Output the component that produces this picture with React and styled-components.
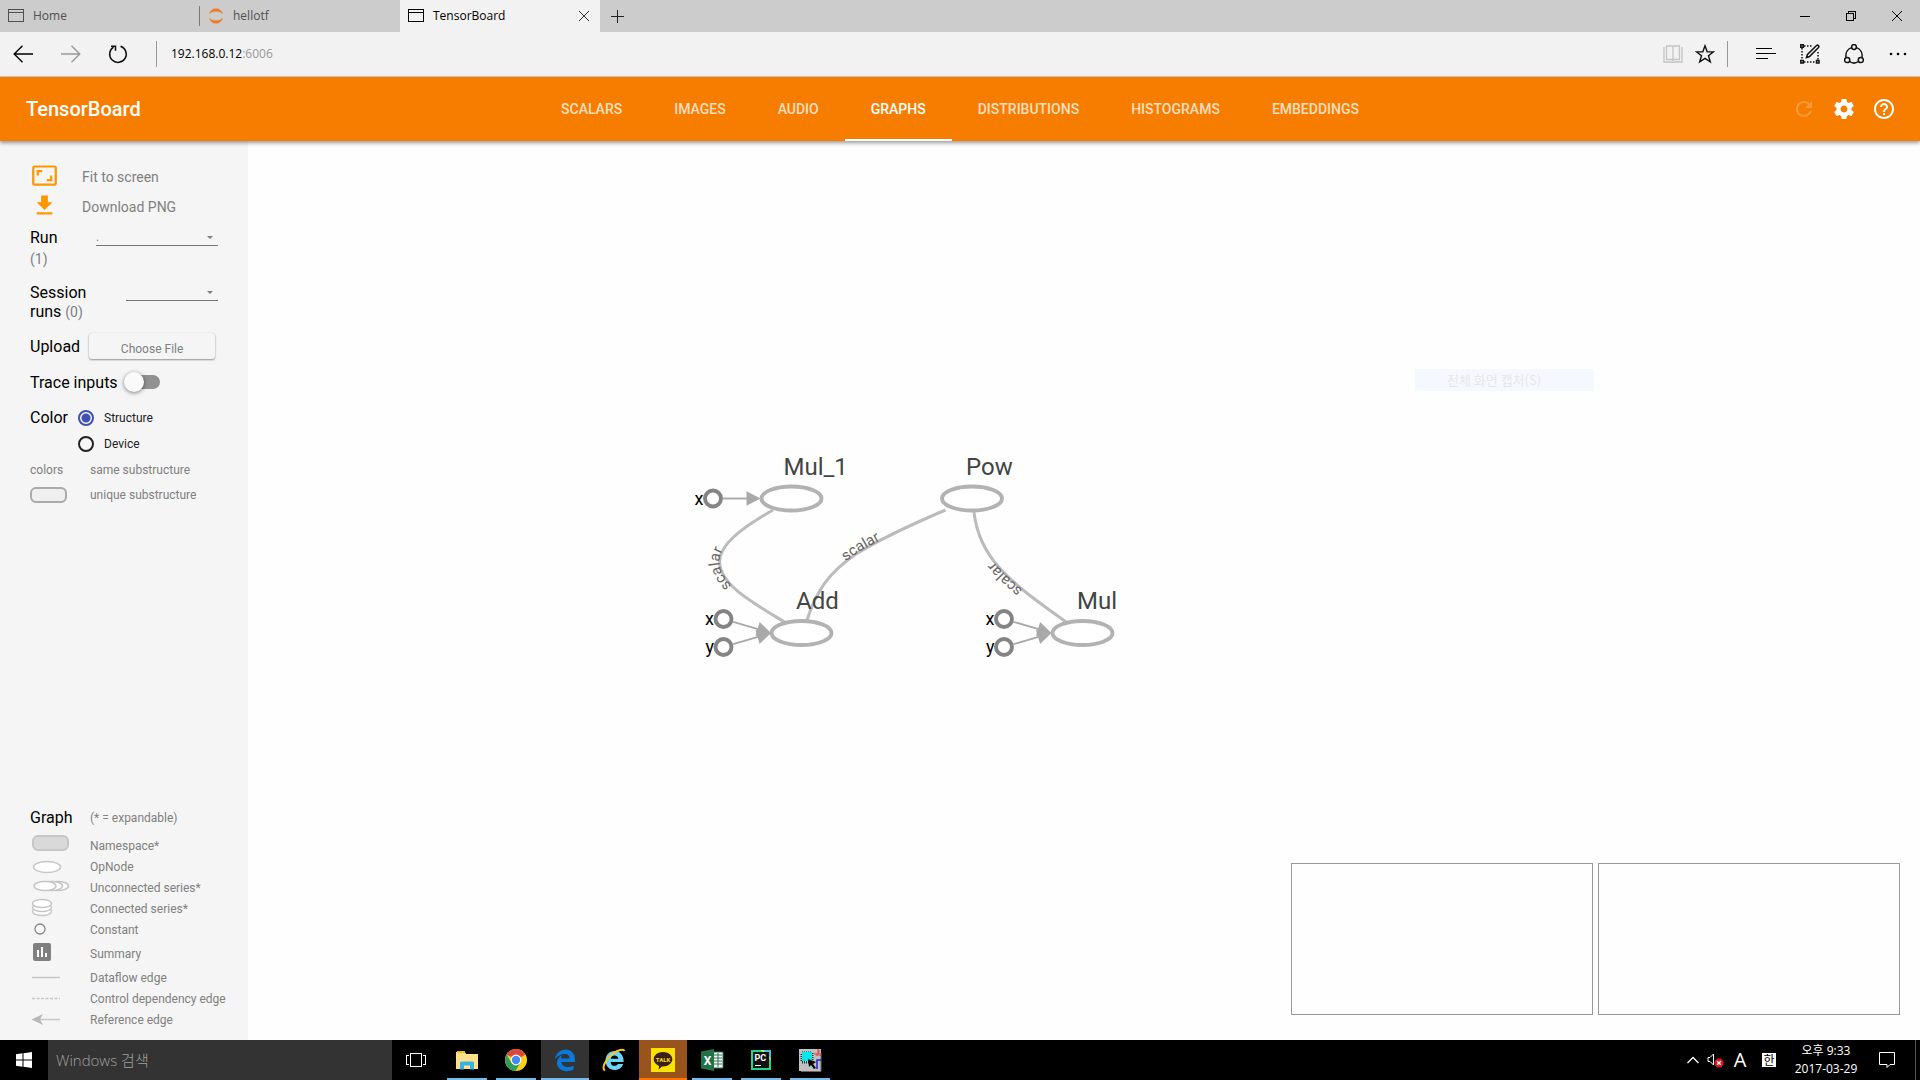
import React from 'react';
import styled, { createGlobalStyle } from 'styled-components';

const ui = `"Open Sans", "Noto Sans", "Noto Sans CJK KR", sans-serif`;
const roboto = `Roboto, "Noto Sans CJK KR", sans-serif`;

const GlobalStyle = createGlobalStyle`
  *, *::before, *::after { box-sizing: border-box; }
  body { margin: 0; font-family: ${roboto}; color: #000; background: #fff; }
  button, input, select { font: inherit; color: inherit; }
  button { border: 0; padding: 0; background: none; cursor: pointer; }
  svg { display: block; flex: none; }
`;

const Screen = styled.div`
  display: flex;
  flex-direction: column;
  min-height: 100vh;
`;

/* ---------- browser chrome ---------- */

const TabStrip = styled.div`
  display: flex;
  height: 32px;
  background: #ccc;
  font: 12px/26px ${ui};
`;

const BrowserTab = styled.div`
  display: flex;
  align-items: center;
  width: 200px;
  padding: 0 10px 0 8px;
  color: ${(p) => (p.$active ? '#000' : '#505050')};
  background: ${(p) => (p.$active ? '#f2f2f2' : 'transparent')};
`;

const TabLabel = styled.span`
  flex: 1;
  margin-left: 9px;
`;

const TabRule = styled.span`
  width: 1px;
  height: 20px;
  margin: 6px 0 0 -1px;
  background: #777;
`;

const IconButton = styled.button`
  display: grid;
  place-items: center;
  width: ${(p) => p.$w || 46}px;
  height: ${(p) => p.$h || 32}px;
`;

const Spacer = styled.div`
  flex: 1;
`;

const Toolbar = styled.div`
  display: flex;
  align-items: center;
  height: 45px;
  background: #f2f2f2;
  border-bottom: 1px solid #ccc;
`;

const ToolbarRule = styled.span`
  width: 1px;
  height: 26px;
  margin: 0 ${(p) => p.$right}px 0 ${(p) => p.$left}px;
  background: #999;
`;

const Address = styled.button`
  flex: 1;
  text-align: left;
  font: 12px/24px ${ui};
  cursor: text;
`;

const Port = styled.span`
  color: #999;
`;

/* ---------- app header ---------- */

const Header = styled.header`
  position: relative;
  z-index: 1;
  display: grid;
  grid-template-columns: 1fr auto 1fr;
  align-items: center;
  height: 64px;
  padding: 0 16px;
  color: #fff;
  background: #f77d00;
  box-shadow: 0 2px 4px rgba(0, 0, 0, 0.4);
`;

const Brand = styled.h1`
  margin: 0;
  padding-left: 10px;
  font-size: 20px;
  font-weight: 500;
  line-height: 24px;
`;

const Nav = styled.nav`
  display: flex;
  align-self: stretch;
`;

const NavTab = styled.button`
  padding: 0 26px;
  font-size: 14px;
  font-weight: 500;
  line-height: 20px;
  color: ${(p) => (p.$active ? '#fff' : '#fddfc0')};
  border-bottom: 2px solid ${(p) => (p.$active ? '#fff' : 'transparent')};
  border-top: 2px solid transparent;
`;

const HeaderActions = styled.div`
  display: flex;
  justify-content: flex-end;
`;

/* ---------- sidebar ---------- */

const Body = styled.div`
  display: flex;
  flex: 1;
`;

const Sidebar = styled.aside`
  display: flex;
  flex-direction: column;
  justify-content: space-between;
  width: 248px;
  padding: 21px 20px 10px 30px;
  background: #f5f5f5;
`;

const Controls = styled.div`
  display: flex;
  flex-direction: column;
  gap: 12px;
`;

const Tools = styled.div`
  margin-bottom: -6px;
`;

const ToolButton = styled.button`
  display: flex;
  align-items: flex-start;
  width: 100%;
  height: 30px;
  padding-left: 1px;
  gap: 24px;
  color: #808080;
  font-size: 14px;
  line-height: 30px;
`;

const ControlRow = styled.div`
  display: flex;
  align-items: ${(p) => (p.$top ? 'flex-start' : 'center')};
  min-height: ${(p) => p.$h || 0}px;
  font-size: 16px;
  line-height: 19px;
`;

const ControlLabel = styled.label`
  width: ${(p) => (p.$w ? p.$w + 'px' : 'auto')};
`;

const Count = styled.span`
  display: ${(p) => (p.$block ? 'block' : 'inline')};
  color: #808080;
  font-size: 14px;
  line-height: ${(p) => (p.$block ? 24 : 14)}px;
`;

const SelectBox = styled.div`
  position: relative;
  width: ${(p) => p.$w}px;
  &::after {
    content: '';
    position: absolute;
    right: 5px;
    top: 8px;
    border: 3px solid transparent;
    border-top-color: #808080;
    border-bottom: 0;
    pointer-events: none;
  }
`;

const Select = styled.select`
  display: block;
  width: 100%;
  height: 18px;
  padding: 0;
  border: 0;
  border-bottom: 1px solid #757575;
  border-radius: 0;
  appearance: none;
  background: none;
  color: #808080;
  font-size: 12px;
  outline: 0;
`;

const FileButton = styled.button`
  width: 126px;
  height: 26px;
  margin-left: 9px;
  padding-top: 5px;
  border-radius: 3px;
  color: #808080;
  font-size: 12px;
  line-height: 20px;
  box-shadow: 0 1px 2px rgba(0, 0, 0, 0.4), 0 0 1px rgba(0, 0, 0, 0.15);
`;

const Toggle = styled.input`
  display: flex;
  align-items: center;
  width: 36px;
  height: 14px;
  margin: 0 0 0 6px;
  border-radius: 7px;
  appearance: none;
  background: linear-gradient(90deg, transparent 8px, #919191 8px);
  &::before {
    content: '';
    width: 20px;
    height: 20px;
    border-radius: 50%;
    background: #fafafa;
    box-shadow: 0 1px 4px rgba(0, 0, 0, 0.5);
  }
`;

const ColorGroup = styled.div`
  display: grid;
  grid-template-columns: 48px 1fr;
  font-size: 16px;
  line-height: 26px;
`;

const RadioLabel = styled.label`
  grid-column: 2;
  display: flex;
  align-items: center;
  gap: 10px;
  height: 26px;
  color: #222;
  font-size: 12px;
`;

const Radio = styled.input`
  width: 16px;
  height: 16px;
  margin: 0;
  border: 2px solid #222;
  border-radius: 50%;
  appearance: none;
  &:checked {
    border-color: #3f51b5;
    background: radial-gradient(#3f51b5 4px, transparent 5px);
  }
`;

const ColorKey = styled.div`
  margin-top: -12px;
`;

const KeyRow = styled.div`
  display: grid;
  grid-template-columns: 60px 1fr;
  align-items: center;
  height: ${(p) => p.$h || 21}px;
  color: #808080;
  font-size: 12px;
  white-space: nowrap;
`;

const LegendHeading = styled(KeyRow)`
  margin-bottom: 7px;
`;

const LegendTitle = styled.strong`
  color: #000;
  font-size: 16px;
  font-weight: 400;
`;

const Swatch = styled.span`
  width: 37px;
  height: 16px;
  border: 2px solid #aaa;
  border-radius: 6px;
  background: #efefef;
`;

/* ---------- graph canvas ---------- */

const Main = styled.main`
  position: relative;
  display: flex;
  flex: 1;
  background: #fefefe;
`;

const Graph = styled.svg`
  position: absolute;
  inset: 0;
  width: 100%;
  height: 100%;
  font-family: ${roboto};
  .title { font-size: 24px; fill: #444; }
  .input { font-size: 18px; fill: #000; text-anchor: end; }
  .edge-label { font-size: 15px; fill: #666; text-anchor: middle; }
`;

const Minimaps = styled.div`
  position: relative;
  display: flex;
  flex: 1;
  align-items: flex-end;
  justify-content: flex-end;
  gap: 5px;
  padding: 0 20px 25px 0;
`;

const Minimap = styled.div`
  width: 302px;
  height: 152px;
  border: 1px solid #999;
`;

const FadingMenuItem = styled.div`
  position: absolute;
  top: 228px;
  right: 326px;
  width: 179px;
  height: 22px;
  padding-left: 32px;
  background: #f5f9ff;
  color: #e8e6e5;
  font: 13px/22px "Noto Sans CJK KR", sans-serif;
`;

/* ---------- taskbar ---------- */

const Taskbar = styled.footer`
  display: flex;
  align-items: stretch;
  height: 40px;
  background: #000;
  color: #fff;
  font-family: ${ui};
`;

const Search = styled.input`
  width: 344px;
  padding: 0 8px;
  border: 0;
  outline: 0;
  background: #333;
  font-size: 15px;
  font-weight: 300;
  &::placeholder { color: #a0a0a0; opacity: 1; }
`;

const Apps = styled.div`
  display: flex;
  gap: 1px;
  margin-left: 3px;
`;

const AppButton = styled.button`
  display: grid;
  place-items: center;
  width: 48px;
  height: 40px;
  background: ${(p) => p.$bg || 'none'};
  background-image: ${(p) => (p.$line ? `linear-gradient(${p.$line}, ${p.$line})` : 'none')};
  background-size: ${(p) => (p.$wide ? '48px' : '40px')} 2px;
  background-position: center bottom;
  background-repeat: no-repeat;
`;

const Tray = styled.div`
  display: flex;
  align-items: center;
`;

const ImeMode = styled.span`
  width: 28px;
  text-align: center;
  font-size: 20px;
  line-height: 40px;
`;

const ImeLang = styled.span`
  width: 14px;
  height: 14px;
  margin: 0 17px 0 8px;
  background: #fff;
  color: #000;
  text-align: center;
  font: 12px/14px "Noto Sans CJK KR", sans-serif;
`;

const Clock = styled.time`
  width: 66px;
  text-align: center;
  font-size: 12px;
  line-height: 18px;
  white-space: nowrap;
`;

const DesktopEdge = styled.span`
  align-self: stretch;
  width: 5px;
  border-left: 1px solid #555;
`;

/* ---------- icons ---------- */

const Svg = ({ w = 24, h = w, box, children, ...rest }) => (
  <svg width={w} height={h} viewBox={box || `0 0 ${w} ${h}`} fill="none" aria-hidden="true" {...rest}>
    {children}
  </svg>
);

const PageIcon = () => (
  <Svg w={16} h={14} stroke="currentColor" shapeRendering="crispEdges">
    <path d="M.5 .5h15v12h-15zM.5 3.5h15" />
  </Svg>
);

const JupyterIcon = () => (
  <Svg w={16} h={16} fill="#f37726">
    <path d="M1 6C2 2.500 5 .5 8 .5s6 2 7 5.500C13 4.300 10.500 3.500 8 3.500S3 4.300 1 6z" />
    <path d="M1 10c1 3.500 4 5.500 7 5.500s6-2 7-5.500c-2 1.700-4.500 2.500-7 2.500S3 11.700 1 10z" />
  </Svg>
);

const Arrow = ({ flip, color }) => (
  <Svg w={20} h={18} stroke={color} strokeWidth="1.4">
    <path d={flip ? 'M0 9h18.500M10.500 .8L18.800 9l-8.300 8.200' : 'M20 9H1.500M9.500 .8L1.200 9l8.300 8.200'} />
  </Svg>
);

const appIcons = {
  explorer: (
    <Svg w={24} h={24}>
      <path d="M1 4h9l1 2h12v15H1z" fill="#ffe08a" />
      <path d="M2 3h8v2H2z" fill="#f5b921" />
      <path d="M5 21.500v-7l1-1h12l1 1v7h-4v-4H9v4z" fill="#35b1e8" />
    </Svg>
  ),
  chrome: (
    <Svg w={24} h={24}>
      <circle cx="12" cy="12" r="11" fill="#fcd116" />
      <path d="M12 12L2.500 6.500A11 11 0 0121.500 6.500z" fill="#d9483b" />
      <path d="M2.500 6.500A11 11 0 0011.500 23l5-8.500L12 17l-4.500-2.300z" fill="#2e9e58" />
      <path d="M12 6.500h9.500" stroke="#d9483b" strokeWidth="1" />
      <circle cx="12" cy="12" r="5.400" fill="#fff" />
      <circle cx="12" cy="12" r="4.200" fill="#4587f3" />
    </Svg>
  ),
  edge: (
    <Svg w={24} h={24}>
      <path
        d="M2 11C3 5 7.500 1.500 12.500 1.500c6 0 9.500 4.500 9.500 10V14H8.500c.2 3.400 3 5 6 5 2.200 0 4.300-.6 6-1.600v4.100c-2 1.200-4.500 1.700-7 1.700C8 23.200 4 19.700 4 15c0-3.400 1.800-6.200 5-7.700C7.700 8.700 8.300 9.500 8.200 10.500h8.300c0-2.700-1.500-4.500-4.500-4.500C8 6 4.500 8 2 11z"
        fill="#0a78d7"
      />
    </Svg>
  ),
  ie: (
    <Svg w={24} h={24}>
      <path
        d="M12.500 3C7.500 3 3.500 7 3.500 12.500S7.300 22 12.500 22c4.300 0 7.500-2.300 8.700-6h-5.300c-.7 1.200-1.800 1.800-3.300 1.800-2.300 0-3.800-1.400-4-3.900h13C22 7.500 18 3 12.500 3zM8.700 10.800c.4-2 1.800-3.300 3.900-3.300s3.500 1.300 3.800 3.300z"
        fill="#6fd3f7"
      />
      <path d="M3 22.500c-4-2.500 1-12 8-17 5-3.600 10.500-5 11.500-2.500" stroke="#f7c427" strokeWidth="2" />
    </Svg>
  ),
  talk: (
    <Svg w={24} h={24}>
      <path d="M0 0h24v24H0z" fill="#fae100" />
      <path d="M12 4c5.200 0 9.300 3.200 9.300 7.200s-4.100 7.200-9.300 7.200h-1L7.500 21.500l.7-3.600C5 16.800 2.700 14.300 2.700 11.200 2.700 7.200 6.800 4 12 4z" fill="#3b1e1e" />
      <text x="12" y="13.500" fill="#fae100" fontSize="6" fontWeight="700" fontFamily="Roboto" textAnchor="middle">TALK</text>
    </Svg>
  ),
  excel: (
    <Svg w={24} h={24}>
      <path d="M12 4h11v16H12z" fill="#fff" stroke="#217346" />
      <path d="M14 7h8M14 10h8M14 13h8M14 16h8M18 5v14" stroke="#217346" />
      <path d="M1 3.500L14 1v22L1 20.500z" fill="#217346" />
      <text x="7.500" y="16.500" fill="#fff" fontSize="12" fontWeight="700" fontFamily="Roboto" textAnchor="middle">X</text>
    </Svg>
  ),
  pycharm: (
    <Svg w={24} h={24}>
      <path d="M2 2h15l5 6v14H2z" fill="#21d789" />
      <path d="M12 2h5l5 6v4z" fill="#fcf84a" />
      <path d="M14 2h8v9z" fill="#3fc4d9" />
      <path d="M4 4h16v16H4z" fill="#111" />
      <path d="M6 17.500h6" stroke="#fff" />
      <text x="5.500" y="12.500" fill="#fff" fontSize="9" fontWeight="700" fontFamily="Roboto">PC</text>
    </Svg>
  ),
  capture: (
    <Svg w={24} h={24}>
      <path d="M1 1h22v22H1z" fill="#c0c0c0" />
      <path d="M3 23.500h20V5" stroke="#666" />
      <path d="M4 5h10v9H4z" stroke="#003c3c" strokeWidth="3" strokeDasharray="1 1" />
      <path d="M4 4h10v9H4z" fill="#00e8f0" />
      <path d="M16 6h4V1M18 7h5M21 2v4" stroke="#e33" />
      <path d="M23 12h-4v9" stroke="#22c" strokeWidth="1.500" />
      <path d="M10 11l8 3-3 2 3 4-2 1-3-4-2 2z" fill="#000" />
    </Svg>
  ),
};

/* ---------- graph drawing ---------- */

const nodes = [
  { label: 'Mul_1', x: 791.5, y: 498.5, tx: 783.5 },
  { label: 'Pow', x: 972, y: 498.5, tx: 966 },
  { label: 'Add', x: 801.5, y: 633, tx: 796 },
  { label: 'Mul', x: 1082.5, y: 633, tx: 1077 },
];

const inputs = [
  { name: 'x', x: 713, y: 498.5, to: [760.5, 498.5] },
  { name: 'x', x: 723.5, y: 619, to: [771, 633] },
  { name: 'y', x: 723.5, y: 647, to: [771, 633] },
  { name: 'x', x: 1004, y: 619, to: [1051.5, 633] },
  { name: 'y', x: 1004, y: 647, to: [1051.5, 633] },
];

const edges = [
  'M784.500 622C751.500 602 720.500 585 719.500 562C719.500 545 740 529 773 510',
  'M807 620C816 592 828 573 856 554C880 539 915 523 945.500 510',
  'M1066 622C1040 603 1020 590 1000 568.500C984 551 976 530 974 512',
];

const Input = ({ name, x, y, to }) => {
  const dx = to[0] - x;
  const dy = to[1] - y;
  const len = Math.hypot(dx, dy);
  const ux = dx / len;
  const uy = dy / len;
  const deg = (Math.atan2(dy, dx) * 180) / Math.PI;
  return (
    <g>
      <line x1={x + ux * 10} y1={y + uy * 10} x2={to[0] - ux * 10} y2={to[1] - uy * 10} stroke="#a9a9a9" strokeWidth="1.900" />
      <path d="M0 0l-14-7.300v14.600z" fill="#a9a9a9" transform={`translate(${to[0]} ${to[1]}) rotate(${deg})`} />
      <circle cx={x} cy={y} r="8" fill="#fff" stroke="#848484" strokeWidth="3.900" />
      <text className="input" x={x - 9.5} y={y + 6}>{name}</text>
    </g>
  );
};

const GraphView = () => (
  <Graph viewBox="248 141 1672 899" preserveAspectRatio="xMidYMid meet" role="img" aria-label="Graph">
    {edges.map((d, i) => (
      <path key={d} id={`edge-${i}`} d={d} fill="none" stroke="#bbb" strokeWidth="3" />
    ))}
    {edges.map((d, i) => (
      <text key={d} className="edge-label">
        <textPath href={`#edge-${i}`} startOffset="50%">scalar</textPath>
      </text>
    ))}
    {inputs.map((n, i) => <Input key={i} {...n} />)}
    {nodes.map((n) => (
      <g key={n.label}>
        <ellipse cx={n.x} cy={n.y} rx="30" ry="12" fill="#fff" stroke="#b2b2b2" strokeWidth="3.900" />
        <text className="title" x={n.tx} y={n.y - 24}>{n.label}</text>
      </g>
    ))}
  </Graph>
);

const line = { stroke: '#c6c6c6', strokeWidth: 1.5 };
const legend = [
  ['Namespace*', <rect x="3" y="1" width="35" height="14" rx="5" fill="#d9d9d9" stroke="#c6c6c6" strokeWidth="2" />],
  ['OpNode', <ellipse cx="17" cy="11" rx="13.500" ry="5.500" fill="#fff" {...line} />],
  ['Unconnected series*', <g fill="#fff" {...line}><ellipse cx="27.500" cy="9" rx="11" ry="4.500" /><ellipse cx="21.500" cy="9" rx="11" ry="4.500" /><ellipse cx="15" cy="9" rx="11" ry="4.500" /></g>],
  ['Connected series*', <g fill="#fff" {...line}><ellipse cx="12" cy="13.500" rx="9.500" ry="4" /><ellipse cx="12" cy="9.500" rx="9.500" ry="4" /><ellipse cx="12" cy="5.500" rx="9.500" ry="4" /></g>],
  ['Constant', <circle cx="10" cy="10" r="5" fill="#fff" stroke="#848484" strokeWidth="1.300" />],
  ['Summary', <g><rect x="3" y="3" width="18" height="18" rx="2" fill="#808080" /><path d="M8 10v7M12 7v10M16 13v4" stroke="#fff" strokeWidth="2" /></g>, 27],
  ['Dataflow edge', <path d="M2 10.500h28" {...line} />],
  ['Control dependency edge', <path d="M2 10.500h28" {...line} strokeDasharray="3 1.500" />],
  ['Reference edge', <g><path d="M8 10.500h22" {...line} /><path d="M1.500 10.500L13 5l-3 5.500 3 5.500z" fill="#b8b8b8" /></g>],
];

const sections = ['SCALARS', 'IMAGES', 'AUDIO', 'GRAPHS', 'DISTRIBUTIONS', 'HISTOGRAMS', 'EMBEDDINGS'];

export default function App() {
  return (
    <Screen>
      <GlobalStyle />

      <TabStrip>
        <BrowserTab><PageIcon /><TabLabel>Home</TabLabel></BrowserTab>
        <TabRule />
        <BrowserTab><JupyterIcon /><TabLabel>hellotf</TabLabel></BrowserTab>
        <BrowserTab $active>
          <PageIcon />
          <TabLabel>TensorBoard</TabLabel>
          <IconButton $w={12} $h={16} aria-label="Close tab">
            <Svg w={12} h={12} stroke="#333"><path d="M1 1l10 10M11 1L1 11" /></Svg>
          </IconButton>
        </BrowserTab>
        <IconButton $w={34} aria-label="New tab">
          <Svg w={13} h={13} stroke="#222" shapeRendering="crispEdges"><path d="M6.500 0v13M0 6.500h13" /></Svg>
        </IconButton>
        <Spacer />
        <IconButton aria-label="Minimize"><Svg w={10} h={10} stroke="#000" shapeRendering="crispEdges"><path d="M0 5.500h10" /></Svg></IconButton>
        <IconButton aria-label="Restore"><Svg w={10} h={10} stroke="#000" shapeRendering="crispEdges"><path d="M.5 2.500h7v7h-7zM2.500 2.500v-2h7v7h-2" /></Svg></IconButton>
        <IconButton aria-label="Close"><Svg w={10} h={10} stroke="#000"><path d="M0 0l10 10M10 0L0 10" /></Svg></IconButton>
      </TabStrip>

      <Toolbar>
        <IconButton $w={46} aria-label="Back"><Arrow color="#000" /></IconButton>
        <IconButton $w={50} aria-label="Forward"><Arrow flip color="#999" /></IconButton>
        <IconButton $w={44} aria-label="Reload">
          <Svg w={20} h={20} stroke="#111" strokeWidth="1.500"><path d="M12.500 2.200a8.300 8.300 0 11-7 .9M3 2.200h4.500v4.500" /></Svg>
        </IconButton>
        <ToolbarRule $left={16} $right={14} />
        <Address aria-label="Address">192.168.0.12<Port>:6006</Port></Address>
        <IconButton $w={32} aria-label="Reading view">
          <Svg w={20} h={18} stroke="#c4c4c4" strokeWidth="1.300"><path d="M1 2v15h7l2 .5 2-.5h7V2M3.500 1H9l1 .8 1-.8h5.500v13.500H11l-1 .8-1-.8H3.500zM10 2v13" /></Svg>
        </IconButton>
        <IconButton $w={32} aria-label="Favorites">
          <Svg w={20} h={20} stroke="#111" strokeWidth="1.400"><path d="M10 1.800l2.200 5.900 6.300.2-5 3.900 1.800 6.100-5.300-3.600-5.300 3.600 1.800-6.100-5-3.900 6.300-.2z" /></Svg>
        </IconButton>
        <ToolbarRule $left={6} $right={16} />
        <IconButton $w={44} aria-label="Hub">
          <Svg w={20} h={14} stroke="#000" shapeRendering="crispEdges"><path d="M0 1.500h16M0 6.500h20M0 11.500h12" strokeWidth="1.500" /></Svg>
        </IconButton>
        <IconButton $w={44} aria-label="Make a web note">
          <Svg w={20} h={20} stroke="#111">
            <path d="M4 2h9M2 4v12M4 18h12M18 8v8" strokeDasharray="1.500 1.500" strokeWidth="1.500" />
            <path d="M.8 .8h2.500v2.500H.8zM.8 16.500h2.500V19H.8zM16.500 16.500H19V19h-2.500z" strokeWidth="1.500" />
            <path d="M6.500 13.500l1-3L16.500 1.500c1.500-1 3 .5 2 2L9.500 12.500z" strokeWidth="1.500" />
          </Svg>
        </IconButton>
        <IconButton $w={44} aria-label="Share">
          <Svg w={20} h={20} stroke="#111" strokeWidth="1.500">
            <circle cx="10" cy="3" r="2.400" /><circle cx="3.200" cy="16" r="2.600" /><circle cx="16.800" cy="16" r="2.600" />
            <path d="M7.600 3.600C3.500 5 1.300 9 2 13.400M12.400 3.600C16.500 5 18.700 9 18 13.400M5.600 17.500c2.700 2 6.100 2 8.800 0" />
          </Svg>
        </IconButton>
        <IconButton $w={44} aria-label="More">
          <Svg w={18} h={4} fill="#000"><circle cx="2" cy="2" r="1.300" /><circle cx="9" cy="2" r="1.300" /><circle cx="16" cy="2" r="1.300" /></Svg>
        </IconButton>
      </Toolbar>

      <Header>
        <Brand>TensorBoard</Brand>
        <Nav>
          {sections.map((s) => <NavTab key={s} $active={s === 'GRAPHS'}>{s}</NavTab>)}
        </Nav>
        <HeaderActions>
          <IconButton $w={40} $h={40} aria-label="Refresh" disabled>
            <Svg w={24} fill="#f99a3a"><path d="M17.650 6.350C16.200 4.900 14.210 4 12 4c-4.420 0-7.990 3.580-7.990 8s3.570 8 7.990 8c3.730 0 6.840-2.550 7.730-6h-2.080c-.82 2.330-3.040 4-5.650 4-3.310 0-6-2.690-6-6s2.690-6 6-6c1.660 0 3.140.69 4.220 1.780L13 11h7V4l-2.350 2.350z" /></Svg>
          </IconButton>
          <IconButton $w={40} $h={40} aria-label="Settings">
            <Svg w={24} fill="#fff"><path d="M19.430 12.980c.04-.32.070-.64.070-.98s-.03-.66-.07-.98l2.110-1.650c.19-.15.24-.42.12-.64l-2-3.460c-.12-.22-.39-.3-.61-.22l-2.490 1c-.52-.4-1.080-.73-1.690-.98l-.38-2.650C14.460 2.180 14.250 2 14 2h-4c-.25 0-.46.18-.49.42l-.38 2.650c-.61.25-1.170.59-1.690.98l-2.490-1c-.23-.09-.49 0-.61.22l-2 3.460c-.13.22-.07.49.12.64l2.110 1.650c-.04.32-.07.65-.07.98s.03.66.07.98l-2.110 1.650c-.19.15-.24.42-.12.64l2 3.460c.12.22.39.3.61.22l2.490-1c.52.4 1.080.73 1.690.98l.38 2.650c.03.24.24.42.49.42h4c.25 0 .46-.18.49-.42l.38-2.650c.61-.25 1.170-.59 1.690-.98l2.490 1c.23.09.49 0 .61-.22l2-3.460c.12-.22.07-.49-.12-.64l-2.110-1.650zM12 15.500c-1.930 0-3.500-1.570-3.500-3.500s1.570-3.500 3.500-3.500 3.500 1.570 3.500 3.500-1.570 3.500-3.500 3.500z" /></Svg>
          </IconButton>
          <IconButton $w={40} $h={40} aria-label="Help">
            <Svg w={24} fill="#fff"><path d="M11 18h2v-2h-2v2zm1-16C6.480 2 2 6.480 2 12s4.480 10 10 10 10-4.480 10-10S17.520 2 12 2zm0 18c-4.410 0-8-3.590-8-8s3.590-8 8-8 8 3.590 8 8-3.590 8-8 8zm0-14c-2.210 0-4 1.790-4 4h2c0-1.100.9-2 2-2s2 .9 2 2c0 2-3 1.750-3 5h2c0-2.250 3-2.500 3-5 0-2.210-1.790-4-4-4z" /></Svg>
          </IconButton>
        </HeaderActions>
      </Header>

      <Body>
        <Sidebar>
          <Controls>
            <Tools>
              <ToolButton>
                <Svg w={27} box="0 0 24 24" fill="#ff9800"><path d="M19 12h-2v3h-3v2h5v-5zM7 9h3V7H5v5h2V9zm14-6H3c-1.100 0-2 .9-2 2v14c0 1.100.9 2 2 2h18c1.100 0 2-.9 2-2V5c0-1.100-.9-2-2-2zm0 16.010H3V4.990h18v14.020z" /></Svg>
                Fit to screen
              </ToolButton>
              <ToolButton>
                <Svg w={27} box="0 0 24 24" fill="#ff9800"><path d="M19 9h-4V3H9v6H5l7 7 7-7zM5 18v2h14v-2H5z" /></Svg>
                Download PNG
              </ToolButton>
            </Tools>
            <ControlRow $top>
              <ControlLabel $w={66} htmlFor="run">Run <Count $block>(1)</Count></ControlLabel>
              <SelectBox $w={122}><Select id="run"><option>.</option></Select></SelectBox>
            </ControlRow>
            <ControlRow $top>
              <ControlLabel $w={96} htmlFor="session">Session<br />runs <Count>(0)</Count></ControlLabel>
              <SelectBox $w={92}><Select id="session" /></SelectBox>
            </ControlRow>
            <ControlRow $h={26}>
              <ControlLabel as="span">Upload</ControlLabel>
              <FileButton>Choose File</FileButton>
            </ControlRow>
            <ControlRow $h={22}>
              <ControlLabel htmlFor="trace">Trace inputs</ControlLabel>
              <Toggle id="trace" type="checkbox" />
            </ControlRow>
            <ColorGroup role="radiogroup" aria-label="Color">
              <span>Color</span>
              <RadioLabel><Radio type="radio" name="color" defaultChecked />Structure</RadioLabel>
              <RadioLabel><Radio type="radio" name="color" />Device</RadioLabel>
            </ColorGroup>
            <ColorKey>
              <KeyRow $h={25}><span>colors</span><span>same substructure</span></KeyRow>
              <KeyRow $h={25}><Swatch /><span>unique substructure</span></KeyRow>
            </ColorKey>
          </Controls>

          <div>
            <LegendHeading><LegendTitle>Graph</LegendTitle><span>(* = expandable)</span></LegendHeading>
            {legend.map(([text, shape, h = 21]) => (
              <KeyRow key={text} $h={h}>
                <Svg w={40} h={h}>{shape}</Svg>
                <span>{text}</span>
              </KeyRow>
            ))}
          </div>
        </Sidebar>

        <Main>
          <GraphView />
          <Minimaps><Minimap /><Minimap /></Minimaps>
          <FadingMenuItem>전체 화면 캡처(S)</FadingMenuItem>
        </Main>
      </Body>

      <Taskbar>
        <IconButton $w={48} $h={40} aria-label="Start">
          <Svg w={16} h={16} fill="#fff"><path d="M0 2.200L6.500 1.300v6.200H0zM7.500 1.200L16 0v7.500H7.500zM0 8.500h6.500v6.200L0 13.800zM7.500 8.500H16V16l-8.500-1.200z" /></Svg>
        </IconButton>
        <Search aria-label="Search" placeholder="Windows 검색" />
        <IconButton $w={48} $h={40} aria-label="Task view">
          <Svg w={20} h={14} stroke="#fff" shapeRendering="crispEdges"><path d="M4.500 .5h11v13h-11zM3 2.500H.5v9H3M17 2.500h2.500v9H17" /></Svg>
        </IconButton>
        <Apps>
          <AppButton $line="#76b9ed" aria-label="File Explorer">{appIcons.explorer}</AppButton>
          <AppButton $line="#76b9ed" aria-label="Chrome">{appIcons.chrome}</AppButton>
          <AppButton $line="#76b9ed" $wide $bg="#333" aria-label="Edge">{appIcons.edge}</AppButton>
          <AppButton aria-label="Internet Explorer">{appIcons.ie}</AppButton>
          <AppButton $line="#ff7200" $wide $bg="#99531c" aria-label="KakaoTalk">{appIcons.talk}</AppButton>
          <AppButton $line="#76b9ed" aria-label="Excel">{appIcons.excel}</AppButton>
          <AppButton $line="#76b9ed" aria-label="PyCharm">{appIcons.pycharm}</AppButton>
          <AppButton $line="#76b9ed" aria-label="Screen capture">{appIcons.capture}</AppButton>
        </Apps>
        <Spacer />
        <Tray>
          <IconButton $w={24} $h={40} aria-label="Show hidden icons">
            <Svg w={12} h={8} stroke="#fff" strokeWidth="1.300"><path d="M.5 7L6 1.500 11.500 7" /></Svg>
          </IconButton>
          <IconButton $w={21} $h={40} aria-label="Volume muted">
            <Svg w={17} h={16} stroke="#fff">
              <path d="M1 5.500h2l3.500-3.500v11L3 9.500H1z" />
              <circle cx="12" cy="11" r="4.500" fill="#e81123" stroke="none" />
              <path d="M10.200 9.200l3.600 3.600M13.800 9.200l-3.600 3.600" strokeWidth="1.300" />
            </Svg>
          </IconButton>
          <ImeMode>A</ImeMode>
          <ImeLang>한</ImeLang>
          <Clock>오후 9:33<br />2017-03-29</Clock>
          <IconButton $w={56} $h={40} aria-label="Notifications">
            <Svg w={16} h={16} stroke="#fff"><path d="M.5 .5h15v12h-4.500l-3 3v-3H.5z" /></Svg>
          </IconButton>
          <DesktopEdge />
        </Tray>
      </Taskbar>
    </Screen>
  );
}
